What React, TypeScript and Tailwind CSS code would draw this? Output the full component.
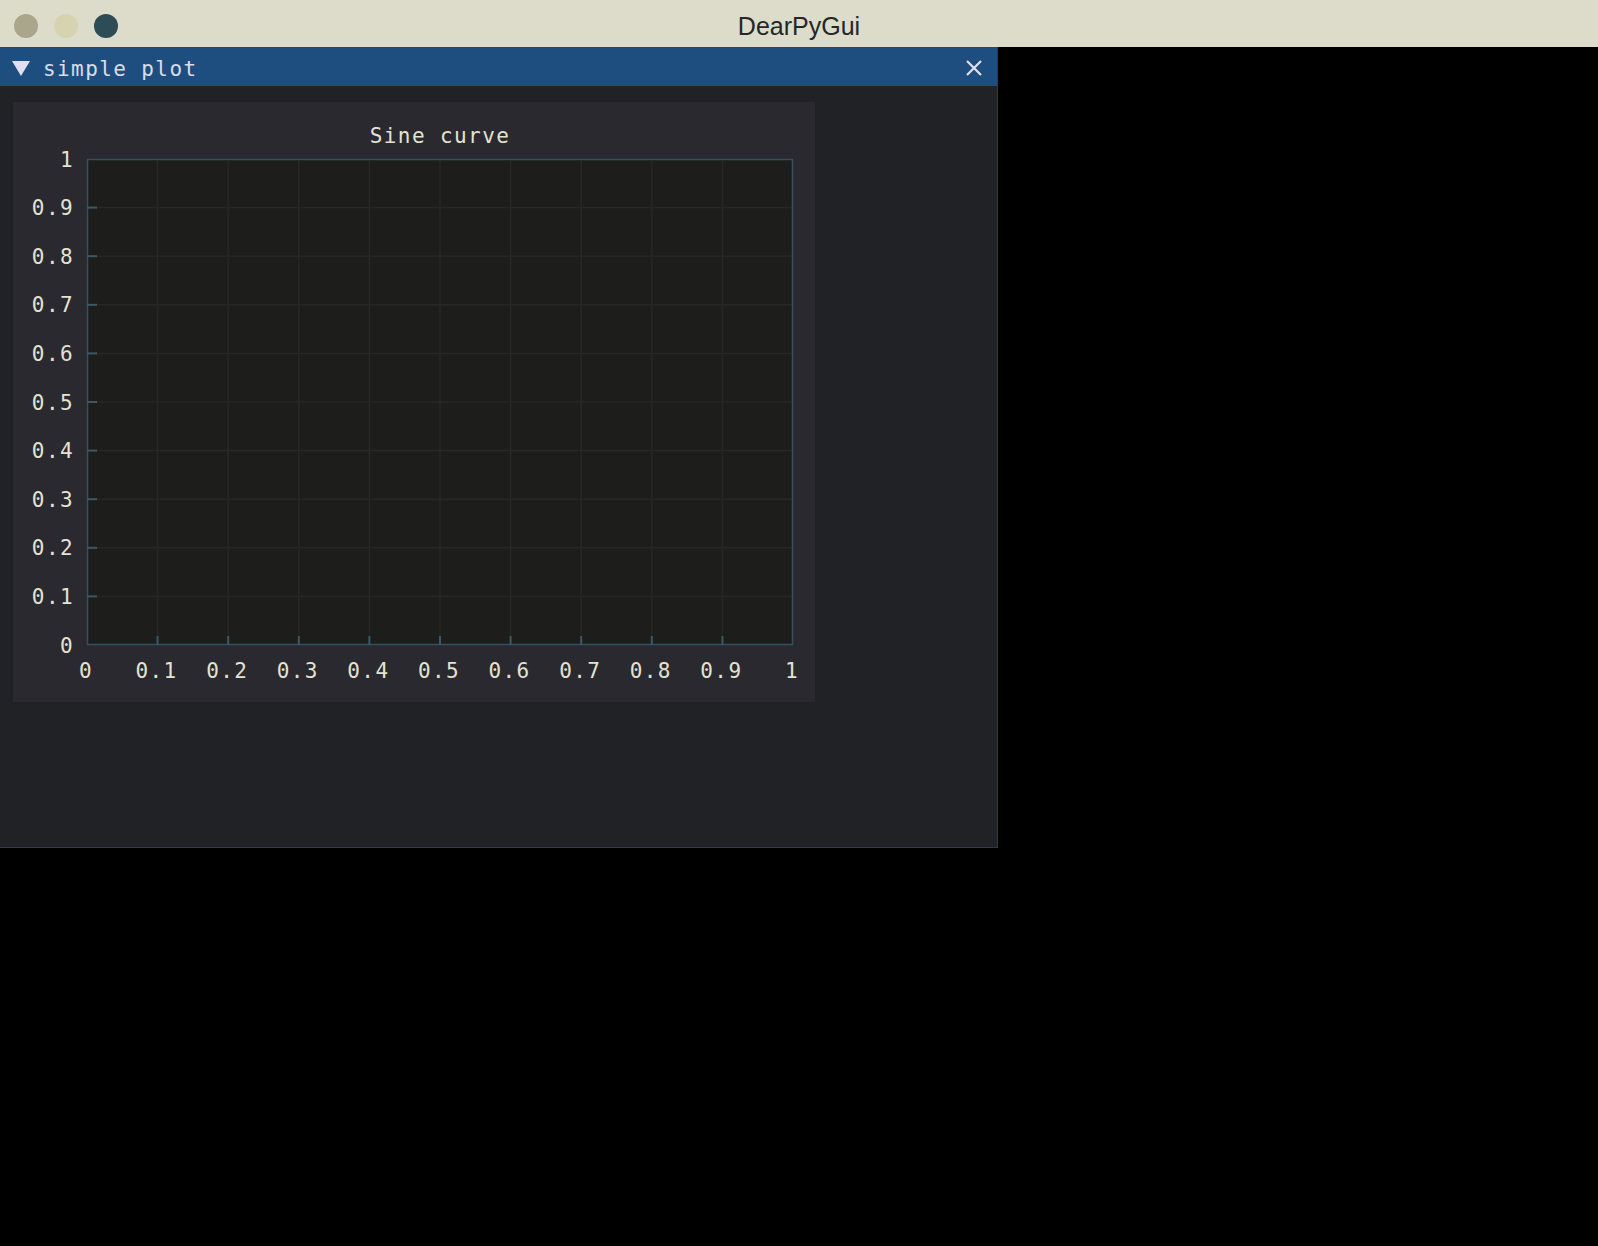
import React from "react";

const mono = '"DejaVu Sans Mono", "Liberation Mono", monospace';

function Plot() {
  const W = 802;
  const H = 600;
  const L = 74;
  const T = 57;
  const R = 780;
  const B = 543;
  const ticks = Array.from({ length: 11 }, (_, i) => i);
  const lab = (i: number) => (i === 0 ? "0" : i === 10 ? "1" : `0.${i}`);
  const xs = (i: number) => L + ((R - L) * i) / 10;
  const ys = (i: number) => B - ((B - T) * i) / 10;
  return (
    <svg width={W} height={H} viewBox={`0 0 ${W} ${H}`} className="block">
      <rect x={L} y={T} width={R - L} height={B - T} fill="#1d1e1b" />
      {ticks.slice(1, 10).map((i) => (
        <g key={`g${i}`}>
          <line x1={xs(i)} y1={T} x2={xs(i)} y2={B} stroke="#272825" strokeWidth={1.5} />
          <line x1={L} y1={ys(i)} x2={R} y2={ys(i)} stroke="#272825" strokeWidth={1.5} />
        </g>
      ))}
      <rect x={L + 0.5} y={T + 0.5} width={R - L - 1} height={B - T - 1} fill="none" stroke="#34505d" strokeWidth={1.5} />
      {ticks.slice(1, 10).map((i) => (
        <g key={`t${i}`}>
          <line x1={xs(i)} y1={B} x2={xs(i)} y2={B - 9} stroke="#3b5866" strokeWidth={2} />
          <line x1={L} y1={ys(i)} x2={L + 10} y2={ys(i)} stroke="#3b5866" strokeWidth={2} />
        </g>
      ))}
      <text
        x={(L + R) / 2}
        y={41}
        textAnchor="middle"
        fill="#e4e2d0"
        style={{ fontFamily: mono, fontSize: 21, letterSpacing: 1.4 }}
      >
        Sine curve
      </text>
      {ticks.map((i) => (
        <text
          key={`y${i}`}
          x={61}
          y={ys(i) + 7.5}
          textAnchor="end"
          fill="#e4e2d0"
          style={{ fontFamily: mono, fontSize: 21, letterSpacing: 1.4 }}
        >
          {lab(i)}
        </text>
      ))}
      {ticks.map((i) => (
        <text
          key={`x${i}`}
          x={xs(i) - 1}
          y={576}
          textAnchor="middle"
          fill="#e4e2d0"
          style={{ fontFamily: mono, fontSize: 21, letterSpacing: 1.4 }}
        >
          {lab(i)}
        </text>
      ))}
    </svg>
  );
}

export default function App() {
  return (
    <div className="w-[1598px] h-[1246px] bg-black overflow-hidden flex flex-col">
      <div className="h-[47px] bg-[#dddccb] relative flex items-center justify-center shrink-0">
        <div className="absolute left-[14px] top-[14px] flex gap-[16px]">
          <div className="w-[24px] h-[24px] rounded-full bg-[#a9a68c]" />
          <div className="w-[24px] h-[24px] rounded-full bg-[#d6d3b0]" />
          <div className="w-[24px] h-[24px] rounded-full bg-[#2d4c55]" />
        </div>
        <span
          className="text-[25px] text-[#262626] leading-none pt-[6px]"
          style={{ fontFamily: '"Liberation Sans", Arial, sans-serif' }}
        >
          DearPyGui
        </span>
      </div>
      <div className="w-[998px] h-[801px] bg-[#212226] flex flex-col border-r border-b border-[#2e3a55]">
        <div className="h-[39px] bg-[#1e4e80] flex items-center shrink-0 relative">
          <svg width="20" height="17" viewBox="0 0 20 17" className="ml-[11px] mt-[3px]">
            <polygon points="1,1 19,1 10,16" fill="#e0e0f0" />
          </svg>
          <span
            className="ml-[12px] text-[21px] text-[#dcdce8] leading-none tracking-[1.4px] pt-[5px]"
            style={{ fontFamily: mono }}
          >
            simple plot
          </span>
          <svg width="18" height="18" viewBox="0 0 18 18" className="ml-auto mr-[14px] mt-[3px]">
            <path d="M2 2 L16 16 M16 2 L2 16" stroke="#e0e0ea" strokeWidth="2.2" />
          </svg>
        </div>
        <div className="pl-[13px] pt-[16px]">
          <div className="w-[802px] h-[600px] bg-[#29292f]">
            <Plot />
          </div>
        </div>
      </div>
    </div>
  );
}
